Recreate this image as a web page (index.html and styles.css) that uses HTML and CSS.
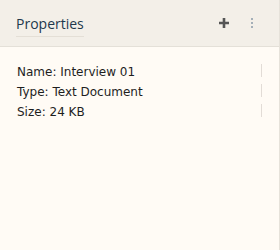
FILE: index.html
```html
<!DOCTYPE html>
<html lang="en">
<head>
  <meta charset="UTF-8" />
  <title>Properties</title>
  <link rel="stylesheet" href="styles.css">
</head>
<body>
  <div class="panel">
    <div class="panel-header">
      <span class="title">Properties</span>
      <div class="actions">
        <button class="icon-btn add" title="Add">
          <svg width="12" height="12" viewBox="0 0 12 12"><path d="M6 1v10M1 6h10" stroke="#555" stroke-width="2.6"/></svg>
        </button>
        <button class="icon-btn more" title="More">
          <svg width="4" height="12" viewBox="0 0 4 12"><circle cx="2" cy="2" r="1" fill="#8a9aa8"/><circle cx="2" cy="6" r="1" fill="#8a9aa8"/><circle cx="2" cy="10" r="1" fill="#8a9aa8"/></svg>
        </button>
      </div>
    </div>
    <div class="panel-body">
      <div class="row">Name: Interview 01</div>
      <div class="row">Type: Text Document</div>
      <div class="row">Size: 24 KB</div>
    </div>
  </div>
</body>
</html>
```
FILE: styles.css
```css
html, body {
  margin: 0;
  padding: 0;
  height: 100%;
}

body {
  background: #fffbf5;
}

.panel {
  height: 100%;
  display: flex;
  flex-direction: column;
  border-right: 1px solid #e6e2da;
  box-sizing: border-box;
}

.panel-header {
  height: 47px;
  display: flex;
  align-items: center;
  justify-content: space-between;
  padding: 0 25px 0 16px;
  background: #f3efe8;
  border-bottom: 1px solid #e4e0d8;
  box-sizing: border-box;
}

.title {
  font-family: 'Open Sans', sans-serif;
  font-size: 14px;
  color: #22384c;
  padding-bottom: 3px;
  border-bottom: 1px solid #e4dfd6;
  margin-top: 4px;
}

.actions {
  display: flex;
  align-items: center;
  gap: 20px;
}

.icon-btn {
  background: none;
  border: none;
  padding: 0;
  display: flex;
  cursor: pointer;
}

.panel-body {
  flex: 1;
  padding: 16px 17px;
}

.row {
  font-family: 'DejaVu Sans', sans-serif;
  font-size: 12px;
  color: #1e1e1e;
  height: 20px;
  line-height: 13px;
  padding-top: 3px;
  box-sizing: border-box;
  position: relative;
}

.row::after {
  content: "";
  position: absolute;
  right: 0;
  top: 1px;
  height: 13px;
  border-right: 1px solid #e2dcd6;
}
```
